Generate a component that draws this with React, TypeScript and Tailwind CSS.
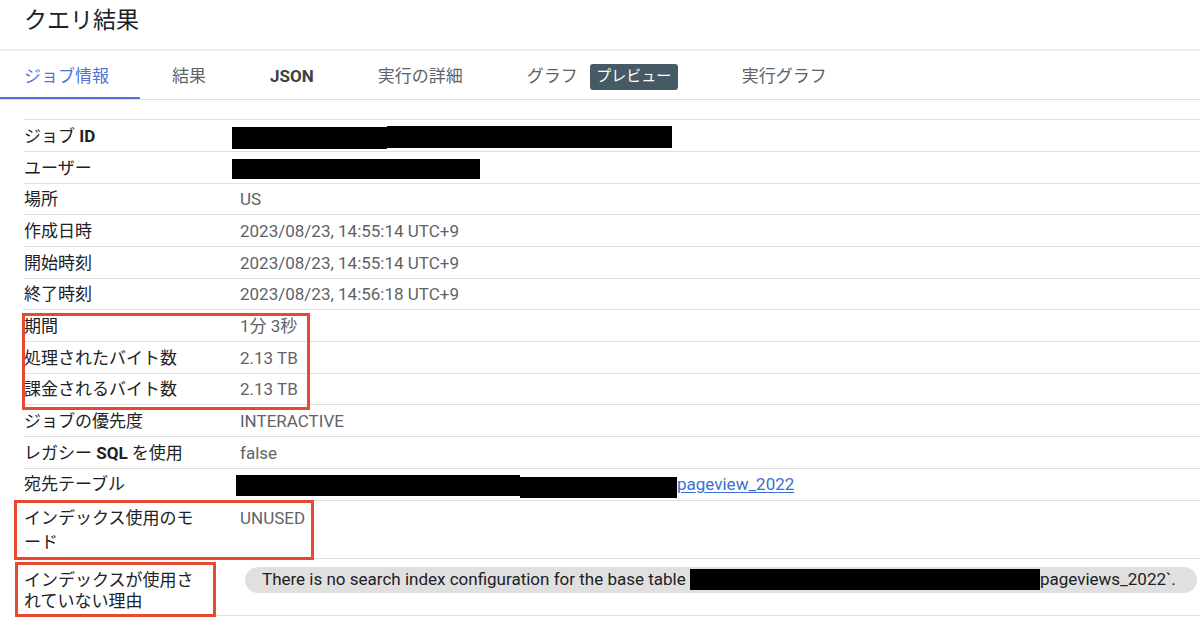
import type { ReactNode } from 'react';

type Row = {
  label: ReactNode;
  value: ReactNode;
  kind?: 'single' | 'double' | 'last';
};

const font = { fontFamily: 'Roboto, "Noto Sans CJK JP", sans-serif' };

function Redact({ w, h, dy = 0 }: { w: number; h: number; dy?: number }) {
  return (
    <span
      className="inline-block bg-black align-middle"
      style={{ width: w, height: h, transform: `translateY(${dy}px)` }}
    />
  );
}

const rows: Row[] = [
  {
    label: (
      <>
        ジョブ <b className="font-bold">ID</b>
      </>
    ),
    value: (
      <span className="flex items-center">
        <Redact w={155} h={22} dy={1} />
        <Redact w={285} h={22} />
      </span>
    ),
  },
  { label: 'ユーザー', value: <Redact w={248} h={20} /> },
  { label: '場所', value: <span className="pl-2">US</span> },
  { label: '作成日時', value: <span className="pl-2">2023/08/23, 14:55:14 UTC+9</span> },
  { label: '開始時刻', value: <span className="pl-2">2023/08/23, 14:55:14 UTC+9</span> },
  { label: '終了時刻', value: <span className="pl-2">2023/08/23, 14:56:18 UTC+9</span> },
  { label: '期間', value: <span className="pl-2">1分 3秒</span> },
  { label: '処理されたバイト数', value: <span className="pl-2">2.13 TB</span> },
  { label: '課金されるバイト数', value: <span className="pl-2">2.13 TB</span> },
  { label: 'ジョブの優先度', value: <span className="pl-2">INTERACTIVE</span> },
  {
    label: (
      <>
        レガシー <b className="font-bold">SQL</b> を使用
      </>
    ),
    value: <span className="pl-2">false</span>,
  },
  {
    label: '宛先テーブル',
    value: (
      <span className="flex items-center pl-1">
        <Redact w={284} h={21} />
        <Redact w={157} h={21} dy={2} />
        <a className="text-[#3b6fd4] underline underline-offset-2">pageview_2022</a>
      </span>
    ),
  },
  {
    label: 'インデックス使用のモード',
    value: <span className="pl-2">UNUSED</span>,
    kind: 'double',
  },
  {
    label: 'インデックスが使用されていない理由',
    value: (
      <span className="ml-[13px] flex h-[26px] w-[952px] items-center rounded-full bg-[#e0e0e0] pl-[17px] text-[#202124]">
        There is no search index configuration for the base table&nbsp;
        <Redact w={350} h={21} />
        pageviews_2022`.
      </span>
    ),
    kind: 'last',
  },
];

function TableRow({ row }: { row: Row }) {
  const kind = row.kind ?? 'single';
  if (kind === 'single') {
    return (
      <div className="flex h-[31.7px] items-center border-t border-[#e0e0e0] pt-[2px]">
        <div className="w-[208px] shrink-0 text-[#202124]">{row.label}</div>
        <div className="text-[#5f6368]">{row.value}</div>
      </div>
    );
  }
  if (kind === 'double') {
    return (
      <div className="flex h-[58.3px] items-start border-t border-[#e0e0e0] pt-[5.5px]">
        <div className="w-[208px] shrink-0 pr-[33px] leading-[24px] text-[#202124]">{row.label}</div>
        <div className="leading-[24px] text-[#5f6368]">{row.value}</div>
      </div>
    );
  }
  return (
    <div className="flex h-[58.3px] items-start border-y border-[#e0e0e0]">
      <div className="w-[208px] shrink-0 pr-[33px] pt-[11.5px] leading-[21px] text-[#202124]">{row.label}</div>
      <div className="pt-[8px]">{row.value}</div>
    </div>
  );
}

const tabs = ['ジョブ情報', '結果', 'JSON', '実行の詳細', 'グラフ', '実行グラフ'];

export default function App() {
  return (
    <div className="relative h-[619px] w-[1200px] overflow-hidden bg-white text-[17px]" style={font}>
      <div className="flex h-[51px] items-center border-b-2 border-[#eeeeee] pb-[12px] pl-6 pt-[6px]">
        <h1 className="text-[23px] font-normal text-[#202124]">クエリ結果</h1>
      </div>

      <div className="flex h-[49px] items-stretch border-b border-[#e0e0e0] pt-[3px] text-[17px]">
        {tabs.map((t, i) => {
          const active = i === 0;
          return (
            <div
              key={t}
              className={
                'relative flex items-center ' +
                (i === 0 ? 'pl-[24px] pr-[31px] ' : 'px-8 ') +
                (active
                  ? 'text-[#4f73d8]'
                  : t === 'JSON'
                    ? 'font-bold text-[#3c4043]'
                    : 'text-[#5f6368]')
              }
            >
              {t}
              {t === 'グラフ' && (
                <span className="ml-3 flex h-[26px] items-center rounded-[3px] bg-[#455a64] px-[6.5px] text-[15px] text-white">
                  プレビュー
                </span>
              )}
              {active && <span className="absolute bottom-0 left-0 right-0 h-[2.3px] bg-[#4f73d8]" />}
            </div>
          );
        })}
      </div>

      <div className="ml-6 mt-[19.3px]">
        {rows.map((r, i) => (
          <TableRow key={i} row={r} />
        ))}
      </div>

      {/* annotation boxes */}
      <div className="pointer-events-none absolute left-[22px] top-[313px] h-[97px] w-[288px] border-[3px] border-[#e64a33]" />
      <div className="pointer-events-none absolute left-[14px] top-[500px] h-[60px] w-[300px] border-[3px] border-[#e64a33]" />
      <div className="pointer-events-none absolute left-[15px] top-[562px] h-[55px] w-[201px] border-[3px] border-[#e64a33]" />
    </div>
  );
}
